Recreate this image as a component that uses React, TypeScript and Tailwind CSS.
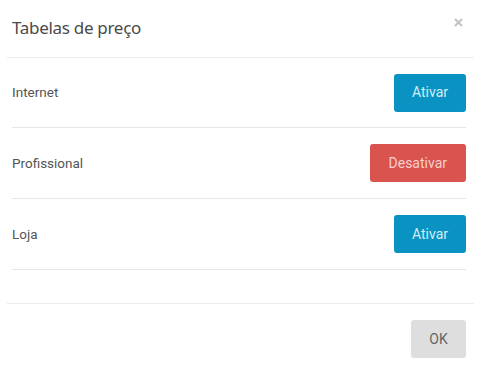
import React from 'react'

interface PriceTable {
    name: string
    active: boolean
}

const tables: PriceTable[] = [
    { name: 'Internet', active: false },
    { name: 'Profissional', active: true },
    { name: 'Loja', active: false },
]

const App: React.FC = () => {
    return (
        <div className="w-[484px] h-[380px] bg-white overflow-hidden font-['Roboto',sans-serif]">
            <div className="mx-[7px] w-[467px]">

                {/* Header */}
                <div className="h-[58px] border-b border-[#ebebeb] flex items-center justify-between pl-[5px] pr-[11px]">
                    <h4 className="text-[17px] text-[#4a4a4a] font-['Noto_Sans',sans-serif] -mt-[1px] tracking-[-0.3px]">
                        Tabelas de preço
                    </h4>
                    <svg width="9" height="9" viewBox="0 0 9 9" className="-mt-[12px]">
                        <path d="M1 1L8 8M8 1L1 8" stroke="#c2c2c2" strokeWidth="2" />
                    </svg>
                </div>

                {/* Body */}
                <div className="pl-[5px] pr-[8px] pb-[33px]">
                    {tables.map((t, i) => (
                        <div
                            key={t.name}
                            className={`${i === 0 ? 'h-[70px]' : 'h-[71px]'} border-b border-[#e6e6e6] flex items-center justify-between`}
                        >
                            <span className="text-[13.5px] text-[#555]">{t.name}</span>
                            {t.active ? (
                                <button className="h-[38px] px-[19px] rounded-[3px] bg-[#d9534f] text-[14px] text-[#f7cfcd]">
                                    Desativar
                                </button>
                            ) : (
                                <button className="h-[38px] px-[18px] rounded-[3px] bg-[#0a93c2] text-[14px] text-[#d2ecf5]">
                                    Ativar
                                </button>
                            )}
                        </div>
                    ))}
                </div>

                {/* Footer */}
                <div className="border-t border-[#ebebeb] pt-[16px] pr-[8px] flex justify-end">
                    <button className="h-[38px] w-[55px] rounded-[3px] bg-[#dedede] text-[14px] text-[#666]">
                        OK
                    </button>
                </div>

            </div>
        </div>
    )
}

export default App
